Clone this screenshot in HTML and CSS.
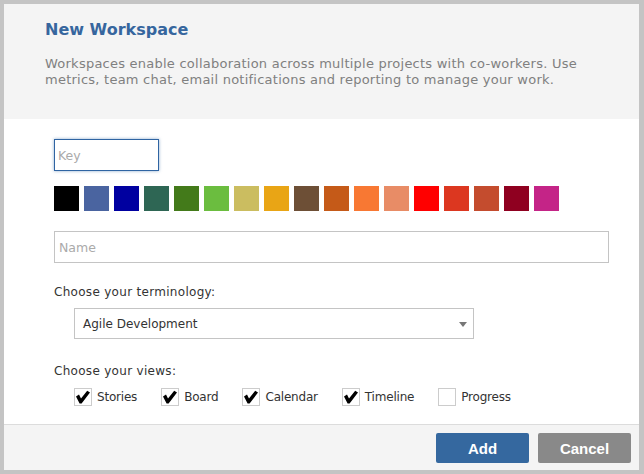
FILE: index.html
```html
<!DOCTYPE html>
<html>
<head>
<meta charset="utf-8">
<link rel="stylesheet" href="styles.css">
</head>
<body>
<div class="dialog">
  <div class="header">
    <h1 class="title">New Workspace</h1>
    <p class="desc">Workspaces enable collaboration across multiple projects with co-workers. Use metrics, team chat, email notifications and reporting to manage your work.</p>
  </div>
  <div class="content">
    <input class="key" type="text" placeholder="Key">
    <div class="swatches">
      <span class="sw" style="background:#000000"></span>
      <span class="sw" style="background:#4a64a0"></span>
      <span class="sw" style="background:#0000a0"></span>
      <span class="sw" style="background:#2e6654"></span>
      <span class="sw" style="background:#437a1a"></span>
      <span class="sw" style="background:#6bbd3f"></span>
      <span class="sw" style="background:#cbbd60"></span>
      <span class="sw" style="background:#e9a515"></span>
      <span class="sw" style="background:#6d4f36"></span>
      <span class="sw" style="background:#c55a18"></span>
      <span class="sw" style="background:#f87833"></span>
      <span class="sw" style="background:#e88c66"></span>
      <span class="sw" style="background:#ff0000"></span>
      <span class="sw" style="background:#dc3720"></span>
      <span class="sw" style="background:#c44c2e"></span>
      <span class="sw" style="background:#8f0020"></span>
      <span class="sw" style="background:#c42487"></span>
    </div>
    <input class="name" type="text" placeholder="Name">
    <div class="label term-label">Choose your terminology:</div>
    <div class="select">
      <span>Agile Development</span>
      <svg class="arrow" width="8" height="5" viewBox="0 0 8 5"><path d="M0 0 H8 L4 5 Z" fill="#777"/></svg>
    </div>
    <div class="label views-label">Choose your views:</div>
    <div class="views">
      <label class="view"><span class="cb"><svg width="18" height="18" viewBox="0 0 18 18"><path d="M2 8.6 L5 6.6 L7 10.4 L13.2 2.8 L16 4.6 L7.6 15.6 L5.6 15.6 Z" fill="#000"/></svg></span>Stories</label>
      <label class="view"><span class="cb"><svg width="18" height="18" viewBox="0 0 18 18"><path d="M2 8.6 L5 6.6 L7 10.4 L13.2 2.8 L16 4.6 L7.6 15.6 L5.6 15.6 Z" fill="#000"/></svg></span>Board</label>
      <label class="view"><span class="cb"><svg width="18" height="18" viewBox="0 0 18 18"><path d="M2 8.6 L5 6.6 L7 10.4 L13.2 2.8 L16 4.6 L7.6 15.6 L5.6 15.6 Z" fill="#000"/></svg></span>Calendar</label>
      <label class="view"><span class="cb"><svg width="18" height="18" viewBox="0 0 18 18"><path d="M2 8.6 L5 6.6 L7 10.4 L13.2 2.8 L16 4.6 L7.6 15.6 L5.6 15.6 Z" fill="#000"/></svg></span>Timeline</label>
      <label class="view"><span class="cb"></span>Progress</label>
    </div>
  </div>
  <div class="footer">
    <button class="btn add">Add</button>
    <button class="btn cancel">Cancel</button>
  </div>
</div>
</body>
</html>
```

FILE: styles.css
```css
* { box-sizing: border-box; }
html, body { margin: 0; padding: 0; background: #c4c4c4; }
.dialog {
  width: 644px;
  height: 474px;
  border: 4px solid #c4c4c4;
  border-right-width: 5px;
  background: #fff;
  display: flex;
  flex-direction: column;
  font-family: "DejaVu Sans", Verdana, sans-serif;
}
.header {
  height: 115px;
  background: #f4f4f4;
  padding: 17px 20px 0 41px;
}
.title {
  margin: 0;
  font-size: 16px;
  line-height: 18px;
  font-weight: bold;
  color: #36669e;
}
.desc {
  margin: 17px 0 0;
  font-size: 13px;
  letter-spacing: 0.24px;
  line-height: 16px;
  color: #808080;
}
.content {
  flex: 1;
  padding: 20px 0 0 50px;
  display: flex;
  flex-direction: column;
  align-items: flex-start;
}
input {
  font-family: "DejaVu Sans", Verdana, sans-serif;
  font-size: 12.5px;
  outline: none;
  background: #fff;
  margin: 0;
}
input::placeholder { color: #aaa; }
.key {
  width: 105px;
  height: 32px;
  border: 1px solid #2f64a2;
  box-shadow: 0 0 3px rgba(47, 100, 162, 0.55);
  padding: 0 4px 0 3px;
}
.swatches {
  margin-top: 15px;
  display: flex;
  gap: 5px;
}
.sw {
  width: 25px;
  height: 25px;
  display: block;
}
.name {
  margin-top: 20px;
  width: 555px;
  height: 32px;
  border: 1px solid #c4c4c4;
  padding: 0 4px;
}
.label {
  font-size: 12px;
  letter-spacing: 0.3px;
  line-height: 16px;
  color: #333;
}
.term-label { margin-top: 21px; }
.select {
  margin: 8px 0 0 20px;
  width: 400px;
  height: 31px;
  border: 1px solid #c4c4c4;
  display: flex;
  align-items: center;
  justify-content: space-between;
  padding: 0 6px 0 8px;
  font-size: 12px;
  color: #333;
}
.arrow { display: block; margin-top: 1px; }
.views-label { margin-top: 24px; }
.views {
  margin: 9px 0 0 20px;
  display: flex;
  gap: 24px;
}
.view {
  display: flex;
  align-items: center;
  gap: 5px;
  font-size: 12px;
  letter-spacing: -0.2px;
  color: #333;
  line-height: 18px;
}
.cb {
  width: 18px;
  height: 18px;
  border: 1px solid #ccc;
  display: block;
  position: relative;
  background: #fff;
}
.cb svg { position: absolute; left: -1px; top: -1px; }
.footer {
  height: 46px;
  border-top: 1px solid #dcdcdc;
  background: #f4f4f4;
  display: flex;
  justify-content: flex-end;
  align-items: flex-start;
  gap: 9px;
  padding: 8px 8px 0 0;
}
.btn {
  width: 93px;
  height: 30px;
  border: none;
  border-radius: 2px;
  color: #fff;
  font-family: "Liberation Sans", Arial, sans-serif;
  font-weight: bold;
  font-size: 15px;
  padding: 0;
  margin: 0;
}
.add { background: #35689f; }
.cancel { background: #898989; }
```
